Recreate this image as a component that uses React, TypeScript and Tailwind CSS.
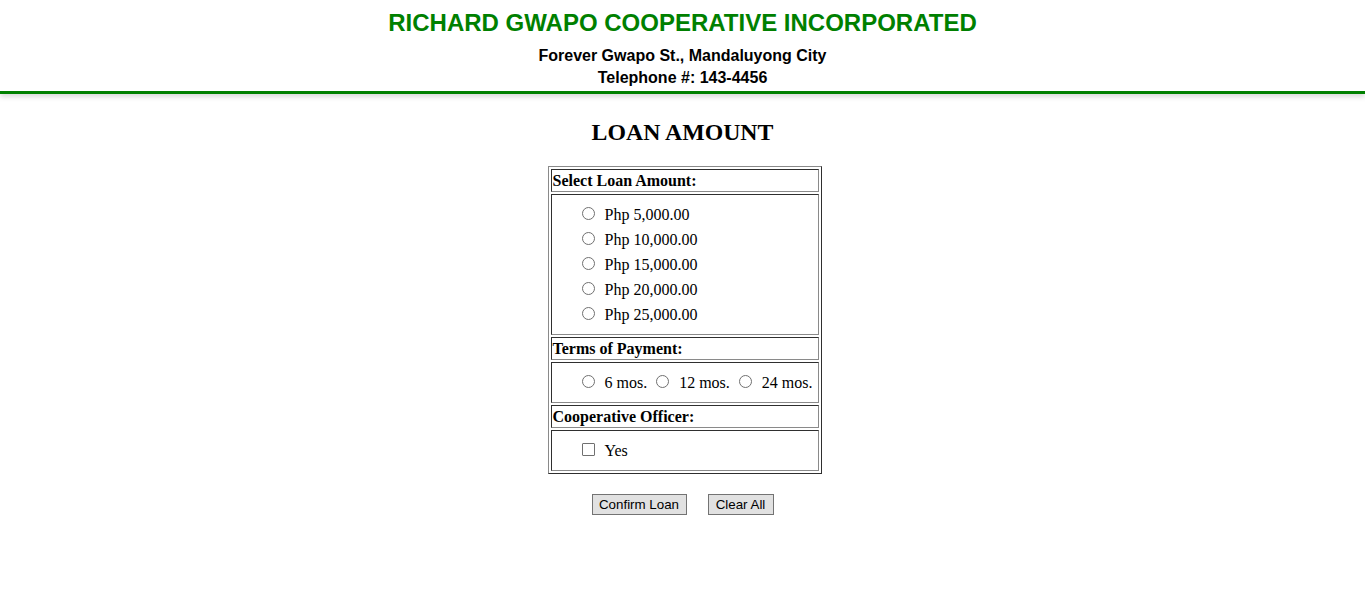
import React from "react";

const serif = "font-['Liberation_Serif','Times_New_Roman',serif]";

function Radio({ name }: { name: string }) {
  return (
    <input
      type="radio"
      name={name}
      className="appearance-none w-[13px] h-[13px] rounded-full border border-[#707070] bg-white shrink-0 m-0"
    />
  );
}

const cell =
  "border border-t-[#2f2f2f] border-l-[#2f2f2f] border-r-[#8a8a8a] border-b-[#8a8a8a] p-[1px] align-middle";

export default function App() {
  const amounts = ["Php 5,000.00", "Php 10,000.00", "Php 15,000.00", "Php 20,000.00", "Php 25,000.00"];
  return (
    <div className="min-h-[615px] bg-white text-black">
      <header className="text-center pt-[9px] pb-[2px] border-b-[3px] border-[#008000] shadow-[0_3px_5px_rgba(0,0,0,0.15)] font-['Liberation_Sans',Arial,sans-serif]">
        <h1 className="text-[24px] leading-[28px] font-bold text-[#008000]">
          RICHARD GWAPO COOPERATIVE INCORPORATED
        </h1>
        <p className="mt-[8px] text-[16px] leading-[22px] font-bold">Forever Gwapo St., Mandaluyong City</p>
        <p className="text-[16px] leading-[22px] font-bold">Telephone #: 143-4456</p>
      </header>

      <main className={`${serif} flex flex-col items-center`}>
        <h2 className="mt-[24px] text-[23.8px] leading-[28px] font-bold">LOAN AMOUNT</h2>

        <table className="mt-[20px] ml-[4px] w-[274px] border-separate border-spacing-[2px] border border-t-[#8a8a8a] border-l-[#8a8a8a] border-r-[#2f2f2f] border-b-[#2f2f2f] text-[16px]">
          <tbody>
            <tr>
              <td className={`${cell} font-bold leading-[19px]`}>Select Loan Amount:</td>
            </tr>
            <tr>
              <td className={cell}>
                <div className="pt-[5px] pb-[7px] pl-[29px]">
                  {amounts.map((a) => (
                    <label key={a} className="flex items-center h-[25px] leading-[25px]">
                      <Radio name="amount" />
                      <span className="ml-[10px] pt-[2px]">{a}</span>
                    </label>
                  ))}
                </div>
              </td>
            </tr>
            <tr>
              <td className={`${cell} font-bold leading-[19px]`}>Terms of Payment:</td>
            </tr>
            <tr>
              <td className={cell}>
                <div className="pl-[29px] pb-[2px] flex items-center h-[37px] whitespace-nowrap">
                  <Radio name="terms" />
                  <span className="ml-[10px] pt-[2px]">6 mos.</span>
                  <span className="ml-[9px] flex"><Radio name="terms" /></span>
                  <span className="ml-[10px] pt-[2px]">12 mos.</span>
                  <span className="ml-[9px] flex"><Radio name="terms" /></span>
                  <span className="ml-[10px] pt-[2px]">24 mos.</span>
                </div>
              </td>
            </tr>
            <tr>
              <td className={`${cell} font-bold leading-[19px]`}>Cooperative Officer:</td>
            </tr>
            <tr>
              <td className={cell}>
                <div className="pl-[29px] pb-[2px] flex items-center h-[37px]">
                  <input
                    type="checkbox"
                    className="appearance-none w-[13px] h-[13px] border border-[#707070] rounded-[1px] bg-white m-0"
                  />
                  <span className="ml-[10px] pt-[2px]">Yes</span>
                </div>
              </td>
            </tr>
          </tbody>
        </table>

        <div className="mt-[20px] flex gap-[21px] font-['Liberation_Sans',Arial,sans-serif] text-[13.33px]">
          <button className="h-[21px] w-[95px] bg-[#e1e1e1] border border-[#737373] leading-[19px]">
            Confirm Loan
          </button>
          <button className="h-[21px] w-[66px] bg-[#e1e1e1] border border-[#737373] leading-[19px]">
            Clear All
          </button>
        </div>
      </main>
    </div>
  );
}
